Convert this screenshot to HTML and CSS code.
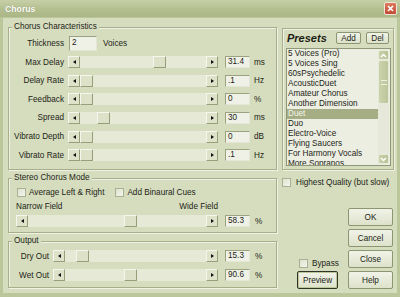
FILE: index.html
```html
<!DOCTYPE html>
<html>
<head>
<meta charset="utf-8">
<title>Chorus</title>
<link rel="stylesheet" href="styles.css">
</head>
<body>
<div class="window">
  <div class="titlebar">
    <span class="title">Chorus</span>
    <span class="close"><svg width="7" height="7" viewBox="0 0 7 7"><path d="M1 1L6 6M6 1L1 6" stroke="#fff" stroke-width="1.7" fill="none"/></svg></span>
  </div>
  <div class="client">
    <div class="leftcol">
      <div class="group chorus">
        <span class="cap">Chorus Characteristics</span>
        <div class="row thick"><span class="lbl">Thickness</span><span class="edit big">2</span><span class="unit voices">Voices</span></div>
        <div class="rows">
          <div class="row"><span class="lbl">Max Delay</span><div class="slider"><span class="arrow l"></span><span class="track"><span class="thumb" style="left:73px"></span></span><span class="arrow r"></span></div><span class="edit">31.4</span><span class="unit">ms</span></div>
          <div class="row"><span class="lbl">Delay Rate</span><div class="slider"><span class="arrow l"></span><span class="track"><span class="thumb" style="left:0px"></span></span><span class="arrow r"></span></div><span class="edit">.1</span><span class="unit">Hz</span></div>
          <div class="row"><span class="lbl">Feedback</span><div class="slider"><span class="arrow l"></span><span class="track"><span class="thumb" style="left:0px"></span></span><span class="arrow r"></span></div><span class="edit">0</span><span class="unit">%</span></div>
          <div class="row"><span class="lbl">Spread</span><div class="slider"><span class="arrow l"></span><span class="track"><span class="thumb" style="left:17px"></span></span><span class="arrow r"></span></div><span class="edit">30</span><span class="unit">ms</span></div>
          <div class="row"><span class="lbl">Vibrato Depth</span><div class="slider"><span class="arrow l"></span><span class="track"><span class="thumb" style="left:0px"></span></span><span class="arrow r"></span></div><span class="edit">0</span><span class="unit">dB</span></div>
          <div class="row"><span class="lbl">Vibrato Rate</span><div class="slider"><span class="arrow l"></span><span class="track"><span class="thumb" style="left:0px"></span></span><span class="arrow r"></span></div><span class="edit">.1</span><span class="unit">Hz</span></div>
        </div>
      </div>
      <div class="group stereo">
        <span class="cap">Stereo Chorus Mode</span>
        <div class="checks">
          <label class="check"><span class="box"></span>Average Left &amp; Right</label>
          <label class="check second"><span class="box"></span>Add Binaural Cues</label>
        </div>
        <div class="fields"><span>Narrow Field</span><span>Wide Field</span></div>
        <div class="row"><div class="slider wide"><span class="arrow l"></span><span class="track"><span class="thumb" style="left:96px"></span></span><span class="arrow r"></span></div><span class="edit">58.3</span><span class="unit pct">%</span></div>
      </div>
      <div class="group output">
        <span class="cap">Output</span>
        <div class="row"><span class="lbl short">Dry Out</span><div class="slider mid"><span class="arrow l"></span><span class="track"><span class="thumb" style="left:11px"></span></span><span class="arrow r"></span></div><span class="edit">15.3</span><span class="unit pct">%</span></div>
        <div class="row wet"><span class="lbl short">Wet Out</span><div class="slider mid"><span class="arrow l"></span><span class="track"><span class="thumb" style="left:59px"></span></span><span class="arrow r"></span></div><span class="edit">90.6</span><span class="unit pct">%</span></div>
      </div>
    </div>
    <div class="rightcol">
      <div class="presets">
        <div class="phead"><span class="ptitle">Presets</span><span class="btn add">Add</span><span class="btn del">Del</span></div>
        <div class="list">
          <div class="items">
            <div class="item">5 Voices (Pro)</div>
            <div class="item">5 Voices Sing</div>
            <div class="item">60sPsychedelic</div>
            <div class="item">AcousticDuet</div>
            <div class="item">Amateur Chorus</div>
            <div class="item">Another Dimension</div>
            <div class="item sel">Duet</div>
            <div class="item">Duo</div>
            <div class="item">Electro-Voice</div>
            <div class="item">Flying Saucers</div>
            <div class="item">For Harmony Vocals</div>
            <div class="item">More Sopranos</div>
          </div>
          <div class="scroll">
            <span class="sbtn"><svg width="7" height="5" viewBox="0 0 7 5"><path d="M1 4L3.5 1.5L6 4" stroke="#fff" stroke-width="1.5" fill="none"/></svg></span>
            <span class="sthumb"><span class="grip"></span></span>
            <span class="strack"></span>
            <span class="sbtn"><svg width="7" height="5" viewBox="0 0 7 5"><path d="M1 1L3.5 3.5L6 1" stroke="#fff" stroke-width="1.5" fill="none"/></svg></span>
          </div>
        </div>
      </div>
      <label class="check hq"><span class="box"></span>Highest Quality (but slow)</label>
      <div class="actions">
        <div class="side">
          <label class="check bypass"><span class="box"></span>Bypass</label>
          <span class="btn preview">Preview</span>
        </div>
        <div class="btncol">
          <span class="btn big">OK</span>
          <span class="btn big">Cancel</span>
          <span class="btn big">Close</span>
          <span class="btn big">Help</span>
        </div>
      </div>
    </div>
  </div>
</div>
</body>
</html>
```
FILE: styles.css
```css
* { box-sizing: border-box; }
html, body { margin: 0; padding: 0; }
body {
  width: 400px; height: 297px; overflow: hidden;
  font-family: "Liberation Sans", Arial, sans-serif;
  font-size: 8.2px; color: #1c1e16;
  background: #bac497;
}
.window {
  width: 400px; height: 297px;
  display: flex; flex-direction: column;
  background: #bcc69b;
}
.titlebar {
  height: 17px; flex: none;
  display: flex; align-items: center; justify-content: space-between;
  padding: 0 3px 0 5px;
  background: linear-gradient(#c6cfa7, #b4bf8f 55%, #abb686);
}
.title {
  color: #fff; font-weight: bold; font-size: 8.7px;
  text-shadow: 0 0 1px #7a845a;
}
.close {
  width: 13px; height: 13px;
  border: 1px solid #f1e6dc; border-radius: 2px;
  background: linear-gradient(#dc7a60, #c24a33);
  display: flex; align-items: center; justify-content: center;
}
.client {
  flex: 1;
  margin: 1px 3px 4px 3px;
  background: #d6dcbe;
  display: flex; gap: 5px;
  padding: 4px 3px 0 5px;
}
.leftcol { width: 269px; display: flex; flex-direction: column; }
.rightcol { width: 112px; display: flex; flex-direction: column; }

.group {
  position: relative;
  border: 1px solid #a6af89;
  box-shadow: inset 1px 1px 0 #eff1e5, 1px 1px 0 #eff1e5;
}
.cap {
  position: absolute; left: 3px; top: -6px;
  padding: 0 2px; line-height: 10px;
  background: #d6dcbe;
}
.chorus { margin-top: 5px; height: 143px; padding-top: 7px; }
.stereo { margin-top: 8px; height: 55px; padding: 8px 0 0 7px; }
.output { margin-top: 8px; height: 47px; padding-top: 8px; }

.row { display: flex; align-items: center; height: 12px; }
.row.thick { height: 16px; }
.rows { margin-top: 5px; display: flex; flex-direction: column; gap: 6.67px; }
.lbl { width: 55px; text-align: right; margin-right: 4px; white-space: nowrap; }
.lbl.short { width: 40px; }
.thick .lbl { margin-right: 5px; }

.slider { width: 150px; height: 12px; display: flex; }
.slider.wide { width: 202px; }
.slider.mid { width: 165px; }
.arrow {
  width: 12px; height: 12px; flex: none;
  background: #dde2c9;
  border: 1px solid; border-color: #f5f7ef #979f7b #979f7b #f5f7ef;
  display: flex; align-items: center; justify-content: center;
}
.arrow::before { content: ""; width: 0; height: 0; border-top: 2.5px solid transparent; border-bottom: 2.5px solid transparent; }
.arrow.l::before { border-right: 3px solid #111; }
.arrow.r::before { border-left: 3px solid #111; }
.track { flex: 1; position: relative; background: #e5e9d5; }
.thumb {
  position: absolute; top: 0; width: 13px; height: 12px;
  background: #dce1c8;
  border: 1px solid; border-color: #f5f7ef #969e7a #969e7a #f5f7ef;
  border-radius: 1px;
}
.edit {
  width: 25px; height: 12px; margin-left: 7px;
  background: #eff1e7;
  border: 1px solid; border-color: #9aa27f #e4e7d6 #e4e7d6 #9aa27f;
  padding-left: 2px; line-height: 10px;
}
.edit.big { width: 28px; height: 15px; margin-left: 0; line-height: 12px; }
.unit { margin-left: 4px; }
.unit.pct { margin-left: 5px; }
.unit.voices { margin-left: 6px; }

.checks { display: flex; height: 10px; align-items: center; }
.check { display: flex; align-items: center; white-space: nowrap; }
.box {
  width: 9px; height: 9px; flex: none;
  background: linear-gradient(135deg, #dfe3cf, #f3f4ec);
  border: 1px solid #a9b093;
}
.checks .check { margin-left: 1px; }
.checks .box { margin-right: 3px; }
.checks .second { margin-left: 11px; }
.fields { width: 202px; display: flex; justify-content: space-between; height: 10px; line-height: 10px; margin-top: 5px; }
.stereo .row { margin-top: 3px; }

.output .row.wet { margin-top: 7px; }

.presets {
  margin-top: 6px; height: 142px;
  border: 1px solid #a6af89;
  box-shadow: inset 1px 1px 0 #eff1e5, 1px 1px 0 #eff1e5;
  padding: 3px 2px 0 3px;
}
.phead { height: 13px; display: flex; align-items: flex-start; padding-left: 1px; padding-right: 2px; }
.ptitle { font-weight: bold; font-style: italic; font-size: 11px; line-height: 13px; margin-right: auto; }
.btn {
  display: flex; align-items: center; justify-content: center;
  border: 1px solid #8d9672; border-radius: 2px;
  background: linear-gradient(#f1f3e8, #dde2ca);
}
.add { width: 25px; height: 12px; }
.del { width: 23px; height: 12px; margin-left: 5px; }
.list {
  margin-top: 3px; width: 105px; height: 118px;
  border: 1px solid #8f9876;
  background: #eceee2;
  display: flex;
}
.items { flex: 1; overflow: hidden; }
.item { height: 10px; line-height: 10px; padding-left: 1px; white-space: nowrap; }
.item.sel { background: #a5ad84; color: #f4f5ea; }
.scroll { width: 12px; display: flex; flex-direction: column; padding: 1px 1px 1px 0; }
.sbtn {
  height: 10px; flex: none;
  background: linear-gradient(90deg, #c9d1a9, #b9c295);
  border: 1px solid #e7eadb; border-radius: 2px;
  display: flex; align-items: center; justify-content: center;
}
.sthumb {
  height: 44px; flex: none;
  background: linear-gradient(90deg, #cbd3ac, #bcc599);
  border: 1px solid #e7eadb; border-radius: 2px;
  display: flex; align-items: center; justify-content: center;
}
.grip { width: 6px; height: 5px; border-top: 1px solid #eef0e2; border-bottom: 1px solid #eef0e2; position: relative; }
.strack { flex: 1; background: #e6e9d9; }

.hq { margin-top: 8px; height: 9px; }
.hq .box { margin-right: 5px; }
.actions {
  margin-top: auto; margin-bottom: 4px; padding-right: 1px;
  display: flex; justify-content: flex-end; align-items: flex-end; gap: 10px;
}
.side { width: 41px; display: flex; flex-direction: column; }
.bypass { height: 9px; margin-left: 2px; }
.bypass .box { margin-right: 4px; }
.preview {
  height: 18px; margin-top: 3px;
  border: 1px solid #2f3524;
  box-shadow: inset 0 0 0 1px #bcc59c;
}
.btncol { width: 45px; display: flex; flex-direction: column; gap: 3px; }
.btn.big { height: 18px; }
```
